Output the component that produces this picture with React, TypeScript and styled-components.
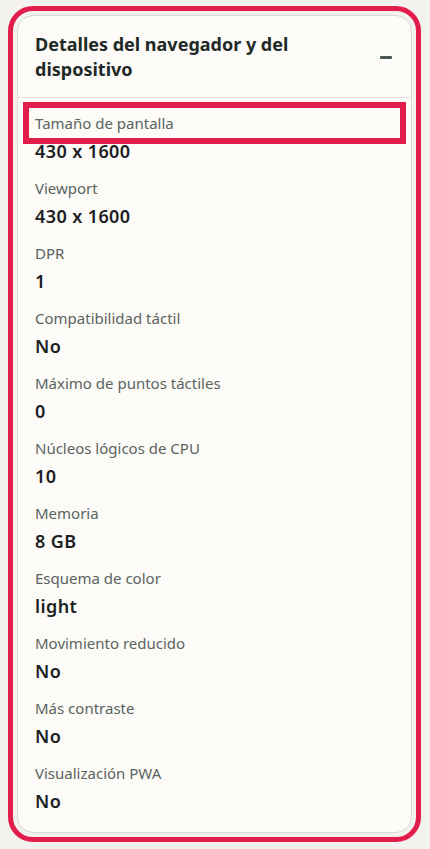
import React from 'react'
import styled, { createGlobalStyle } from 'styled-components'

const GlobalStyle = createGlobalStyle`
  html, body {
    margin: 0;
    padding: 0;
    background: #f3f2ee;
  }
  body {
    font-family: 'Noto Sans', 'Noto Sans CJK JP', sans-serif;
    -webkit-font-smoothing: antialiased;
  }
`

const Page = styled.div`
  padding: 15px 18px 16px 17px;
`

const Card = styled.section`
  background: #fcfbf7;
  border: 1px solid #dcdad3;
  border-radius: 16px;
  outline: 5px solid #e31d4b;
  outline-offset: 4px;
`

const Header = styled.header`
  display: flex;
  align-items: center;
  justify-content: space-between;
  gap: 28px;
  padding: 16px 19px 15px 17px;
  border-bottom: 1px solid #e6e4dd;
`

const Title = styled.h2`
  margin: 0;
  font-size: 18px;
  line-height: 25px;
  font-weight: 700;
  color: #1f2926;
`

const Collapse = styled.span`
  flex: none;
  width: 12px;
  height: 3px;
  background: #4b5753;
  border-radius: 1px;
`

const Body = styled.dl`
  margin: 0;
  padding: 14px 17px 19px 17px;
  display: flex;
  flex-direction: column;
  gap: 14px;
`

const Field = styled.div`
  display: flex;
  flex-direction: column;
  gap: 5px;
`

const Label = styled.dt<{ $highlight?: boolean }>`
  font-size: 15px;
  line-height: 22px;
  color: #5a6360;
  ${(p) =>
    p.$highlight &&
    `
    margin: -4px -6px -4px -6px;
    padding: 4px 6px;
    outline: 6px solid #e31d4b;
  `}
`

const Value = styled.dd`
  margin: 0;
  font-size: 18px;
  line-height: 24px;
  font-weight: 600;
  letter-spacing: 0.4px;
  color: #1b201f;
`

const fields: [string, string][] = [
  ['Tamaño de pantalla', '430 x 1600'],
  ['Viewport', '430 x 1600'],
  ['DPR', '1'],
  ['Compatibilidad táctil', 'No'],
  ['Máximo de puntos táctiles', '0'],
  ['Núcleos lógicos de CPU', '10'],
  ['Memoria', '8 GB'],
  ['Esquema de color', 'light'],
  ['Movimiento reducido', 'No'],
  ['Más contraste', 'No'],
  ['Visualización PWA', 'No'],
]

const App: React.FC = () => {
  return (
    <Page>
      <GlobalStyle />
      <Card>
        <Header>
          <Title>Detalles del navegador y del dispositivo</Title>
          <Collapse />
        </Header>
        <Body>
          {fields.map(([label, value], i) => (
            <Field key={label}>
              <Label $highlight={i === 0}>{label}</Label>
              <Value>{value}</Value>
            </Field>
          ))}
        </Body>
      </Card>
    </Page>
  )
}

export default App
